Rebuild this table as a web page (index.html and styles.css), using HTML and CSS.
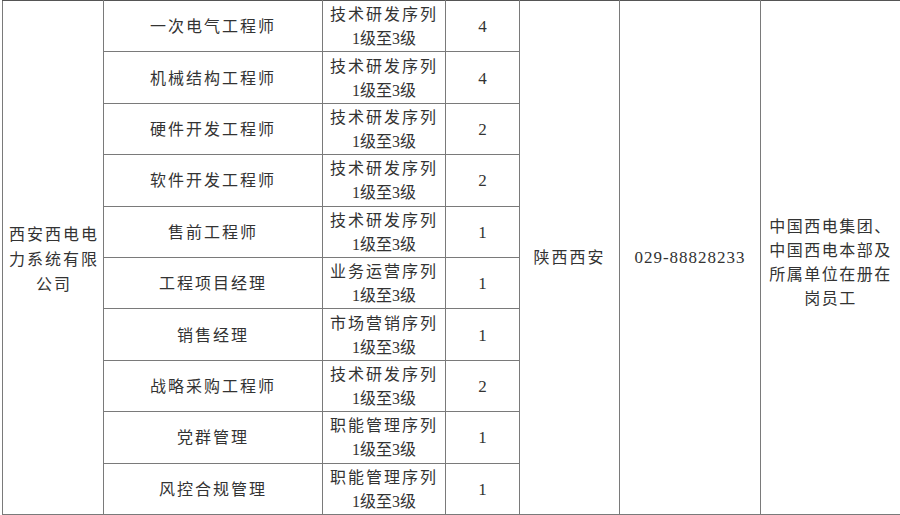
FILE: index.html
```html
<!DOCTYPE html>
<html lang="zh">
<head>
<meta charset="utf-8">
<link rel="stylesheet" href="styles.css">
</head>
<body>
<table class="jobs">
  <colgroup>
    <col class="c-co"><col class="c-pos"><col class="c-seq"><col class="c-num"><col class="c-loc"><col class="c-tel"><col class="c-req">
  </colgroup>
  <tbody>
    <tr>
      <td rowspan="10" class="co">西安西电电<br>力系统有限<br>公司</td>
      <td class="pos">一次电气工程师</td>
      <td class="seq">技术研发序列<br><span class="lv">1级至3级</span></td>
      <td class="num">4</td>
      <td rowspan="10" class="loc">陕西西安</td>
      <td rowspan="10" class="tel">029-88828233</td>
      <td rowspan="10" class="req">中国西电集团、<br>中国西电本部及<br>所属单位在册在<br>岗员工</td>
    </tr>
    <tr><td class="pos">机械结构工程师</td><td class="seq">技术研发序列<br><span class="lv">1级至3级</span></td><td class="num">4</td></tr>
    <tr><td class="pos">硬件开发工程师</td><td class="seq">技术研发序列<br><span class="lv">1级至3级</span></td><td class="num">2</td></tr>
    <tr><td class="pos">软件开发工程师</td><td class="seq">技术研发序列<br><span class="lv">1级至3级</span></td><td class="num">2</td></tr>
    <tr><td class="pos">售前工程师</td><td class="seq">技术研发序列<br><span class="lv">1级至3级</span></td><td class="num">1</td></tr>
    <tr><td class="pos">工程项目经理</td><td class="seq">业务运营序列<br><span class="lv">1级至3级</span></td><td class="num">1</td></tr>
    <tr><td class="pos">销售经理</td><td class="seq">市场营销序列<br><span class="lv">1级至3级</span></td><td class="num">1</td></tr>
    <tr><td class="pos">战略采购工程师</td><td class="seq">技术研发序列<br><span class="lv">1级至3级</span></td><td class="num">2</td></tr>
    <tr><td class="pos">党群管理</td><td class="seq">职能管理序列<br><span class="lv">1级至3级</span></td><td class="num">1</td></tr>
    <tr><td class="pos">风控合规管理</td><td class="seq">职能管理序列<br><span class="lv">1级至3级</span></td><td class="num">1</td></tr>
  </tbody>
</table>
</body>
</html>
```
FILE: styles.css
```css
html, body {
  margin: 0;
  padding: 0;
  background: #ffffff;
}
body {
  padding: 0 0 0 2px;
  font-family: "Liberation Serif", "Noto Sans CJK SC", serif;
  color: #333333;
}
.jobs {
  border-collapse: collapse;
  table-layout: fixed;
  width: 898px;
  font-size: 16px;
}
.c-co { width: 101px; }
.c-pos { width: 219px; }
.c-seq { width: 123px; }
.c-num { width: 74px; }
.c-loc { width: 100px; }
.c-tel { width: 141px; }
.c-req { width: 140px; }
.jobs tr { height: 51.4px; }
.jobs td {
  border: 1px solid #7a7a7a;
  text-align: center;
  vertical-align: middle;
  padding: 2px 0 0 0;
  line-height: 24px;
  letter-spacing: 2px;
}
.jobs tr:first-child td { border-top-color: #555555; }
.jobs td.co { line-height: 25px; letter-spacing: 2px; padding-left: 2px; padding-top: 4px; }
.jobs td.num { font-size: 17px; letter-spacing: 0; }
.lv { letter-spacing: 0; font-size: 16px; }
.jobs td.tel { font-size: 17px; letter-spacing: 1px; }
.jobs td.req { letter-spacing: 1.5px; padding-top: 12px; padding-left: 0; }
```
